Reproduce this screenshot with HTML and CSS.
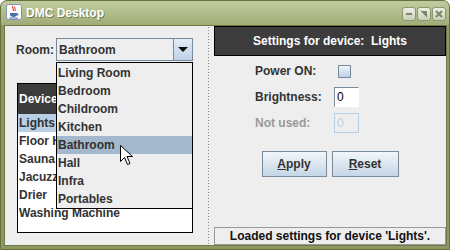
FILE: index.html
```html
<!DOCTYPE html>
<html lang="en">
<head>
    <meta charset="UTF-8">
    <title>DMC Desktop</title>
    <link rel="stylesheet" href="styles.css">
</head>
<body>
    <div class="window">
        <div class="titlebar">
            <span class="app-icon">
                <svg width="16" height="16" viewBox="0 0 16 16">
                    <rect x="0.5" y="0.5" width="15" height="15" rx="2" fill="#fdfdfd" stroke="#7f93b3"/>
                    <path d="M7 2c-2 2 2 3 0 5M9 3c-1.5 1.5 1.5 2 0 4" fill="none" stroke="#e0452a" stroke-width="1.2"/>
                    <path d="M4 9h7v1.5c0 1.5-1.5 2.5-3.5 2.5S4 12 4 10.5z" fill="#4a6fa8"/>
                    <path d="M11 9.5c1.5 0 1.5 2 0 2" fill="none" stroke="#4a6fa8"/>
                    <path d="M3 14h9" stroke="#4a6fa8"/>
                </svg>
            </span>
            <span class="title">DMC Desktop</span>
            <div class="win-buttons">
                <span class="win-btn">
                    <svg width="14" height="14" viewBox="0 0 14 14"><rect x="4" y="6" width="6" height="2" fill="#7d8668"/></svg>
                </span>
                <span class="win-btn">
                    <svg width="14" height="14" viewBox="0 0 14 14"><path d="M4 4h6v6z" fill="#7d8668"/><path d="M3.5 3.5L10 10" stroke="#7d8668"/></svg>
                </span>
                <span class="win-btn">
                    <svg width="14" height="14" viewBox="0 0 14 14"><path d="M4 4l6 6M10 4l-6 6" stroke="#7d8668" stroke-width="2"/></svg>
                </span>
            </div>
        </div>

        <div class="content">
            <div class="left-panel">
                <div class="room-row">
                    <label class="room-label">Room:</label>
                    <div class="combo">
                        <span class="combo-value">Bathroom</span>
                        <span class="combo-arrow">
                            <svg width="10" height="6" viewBox="0 0 10 6"><path d="M0 0h10L5 5z" fill="#111"/></svg>
                        </span>
                        <ul class="combo-popup">
                            <li>Living Room</li>
                            <li>Bedroom</li>
                            <li>Childroom</li>
                            <li>Kitchen</li>
                            <li class="selected">Bathroom</li>
                            <li>Hall</li>
                            <li>Infra</li>
                            <li>Portables</li>
                        </ul>
                    </div>
                </div>

                <!-- the popup hides everything right of x=56, so cells are clipped there -->
                <div class="device-table">
                    <div class="table-head"><span class="cell">Devices</span></div>
                    <div class="table-row selected"><span class="cell">Lights</span></div>
                    <div class="table-row"><span class="cell">Floor Heating</span></div>
                    <div class="table-row"><span class="cell">Sauna</span></div>
                    <div class="table-row"><span class="cell">Jacuzzi</span></div>
                    <div class="table-row"><span class="cell">Drier</span></div>
                    <div class="table-row">Washing Machine</div>
                </div>
            </div>

            <div class="splitter"></div>

            <div class="right-panel">
                <div class="settings-head">Settings for device:  Lights</div>

                <div class="form">
                    <span class="form-label">Power ON:</span>
                    <span class="checkbox"></span>
                    <span class="form-label">Brightness:</span>
                    <span class="field">0</span>
                    <span class="form-label disabled">Not used:</span>
                    <span class="field disabled">0</span>
                </div>

                <div class="buttons">
                    <button class="btn btn-apply"><u>A</u>pply</button>
                    <button class="btn btn-reset"><u>R</u>eset</button>
                </div>

                <div class="status">Loaded settings for device 'Lights'.</div>
            </div>
        </div>

        <svg class="cursor" width="13" height="21" viewBox="0 0 13 21">
            <path d="M0.5 0.5V16.5L4.5 12.5L7.5 19.5L10 18.5L7 11.5H12.5Z" fill="#fff" stroke="#000"/>
        </svg>
    </div>
</body>
</html>
```

FILE: styles.css
```css
body {
    margin: 0;
    background-color: #fff;
    font-family: "Liberation Sans", Arial, sans-serif;
    font-size: 12px;
    font-weight: bold;
    color: #333;
}
.window {
    position: relative;
    width: 450px;
    height: 250px;
    box-sizing: border-box;
    border: 1px solid #66733f;
    border-radius: 7px 7px 0 0;
    background: linear-gradient(#c2cc9f, #a0ab76 24px, #8d9962 24px);
    padding: 0 2px 3px 3px;
    display: flex;
    flex-direction: column;
    overflow: hidden;
}
.titlebar {
    height: 24px;
    flex: none;
    display: flex;
    align-items: center;
    padding-left: 2px;
}
.app-icon {
    display: flex;
    width: 16px;
    height: 16px;
    margin-top: -2px;
}
.title {
    margin-left: 4px;
    color: #fff;
    text-shadow: 1px 1px 0 rgba(60, 70, 30, 0.5);
}
.win-buttons {
    margin-left: auto;
    display: flex;
    gap: 1px;
    margin-right: 1px;
    margin-top: 2px;
}
.win-btn {
    display: flex;
    width: 14px;
    height: 14px;
    box-sizing: border-box;
    border: 1px solid #8d9673;
    border-radius: 3px;
    background: linear-gradient(#eef0e6, #c9cfb6);
    align-items: center;
    justify-content: center;
}
.win-btn svg {
    margin: -1px;
}
.content {
    flex: 1;
    display: flex;
    background-color: #eee;
    border: 1px solid #6d7a47;
}

/* left side */
.left-panel {
    width: 200px;
    flex: none;
}
.room-row {
    display: flex;
    align-items: center;
    padding: 12px 0 0 11px;
}
.room-label {
    width: 40px;
}
.combo {
    position: relative;
    width: 137px;
    height: 23px;
    box-sizing: border-box;
    border: 1px solid #7a8a99;
    display: flex;
    align-items: center;
    background-color: #eee;
}
.combo-value {
    flex: 1;
    padding-left: 2px;
}
.combo-arrow {
    width: 18px;
    height: 100%;
    border-left: 1px solid #7a8a99;
    background: linear-gradient(#e3edf7, #bcd1e6);
    display: flex;
    align-items: center;
    justify-content: center;
}
.combo-popup {
    position: absolute;
    top: 23px;
    left: -1px;
    width: 137px;
    box-sizing: border-box;
    margin: 0;
    padding: 1px 0 0 0;
    list-style: none;
    border: 1px solid #000;
    background-color: #eee;
    z-index: 2;
}
.combo-popup li {
    height: 18px;
    line-height: 18px;
    padding-left: 1px;
}
.combo-popup li.selected {
    background-color: #a3b8cc;
}
.device-table {
    margin: 22px 0 0 12px;
    width: 176px;
    height: 150px;
    box-sizing: border-box;
    border: 1px solid #000;
    background-color: #fff;
    overflow: hidden;
}
.table-head {
    height: 30px;
    line-height: 30px;
    background-color: #3c3c3c;
    color: #fff;
    padding-left: 1px;
}
.table-row {
    height: 18px;
    line-height: 18px;
    padding-left: 1px;
    white-space: nowrap;
}
.cell {
    display: block;
    width: 38px;
    overflow: hidden;
    white-space: nowrap;
}
.table-row.selected {
    background-color: #b8cfe5;
}

.splitter {
    width: 9px;
    flex: none;
    background-image: repeating-linear-gradient(#8a8a8a 0 1px, transparent 1px 3px);
    background-size: 1px 100%;
    background-position: 3px 1px;
    background-repeat: no-repeat;
}

/* right side */
.right-panel {
    flex: 1;
    display: flex;
    flex-direction: column;
}
.settings-head {
    height: 30px;
    line-height: 28px;
    box-sizing: border-box;
    border: 1px solid #000;
    background-color: #3c3c3c;
    color: #fff;
    text-align: center;
    white-space: pre;
}
.form {
    display: grid;
    grid-template-columns: 79px 25px;
    grid-auto-rows: 20px;
    row-gap: 6px;
    align-items: center;
    margin-top: 5px;
    padding-left: 41px;
}
.form-label.disabled {
    color: #999;
}
.checkbox {
    width: 13px;
    height: 13px;
    box-sizing: border-box;
    margin-left: 4px;
    border: 1px solid #7a8a99;
    background: linear-gradient(#eef3f9, #bcd0e4);
}
.field {
    height: 20px;
    line-height: 18px;
    box-sizing: border-box;
    padding-left: 2px;
    border: 1px solid #fff;
    border-top-color: #7a8a99;
    border-left-color: #7a8a99;
    background-color: #fff;
    font-weight: normal;
    color: #000;
}
.field.disabled {
    border-color: #b8cfe5;
    background-color: #eee;
    color: #b8cfe5;
}
.buttons {
    display: flex;
    justify-content: center;
    gap: 5px;
    margin-top: 18px;
}
.btn {
    height: 26px;
    box-sizing: border-box;
    border: 1px solid #7a8a99;
    background: linear-gradient(#f2f6fa, #c5d6e7);
    font-family: inherit;
    font-size: 12px;
    font-weight: bold;
    color: #333;
    padding: 0;
}
.btn-apply {
    width: 65px;
}
.btn-reset {
    width: 67px;
}
.status {
    margin-top: auto;
    height: 18px;
    line-height: 16px;
    box-sizing: border-box;
    border: 1px solid #999;
    text-align: center;
    color: #111;
}
.cursor {
    position: absolute;
    left: 119px;
    top: 144px;
    z-index: 3;
}
```
